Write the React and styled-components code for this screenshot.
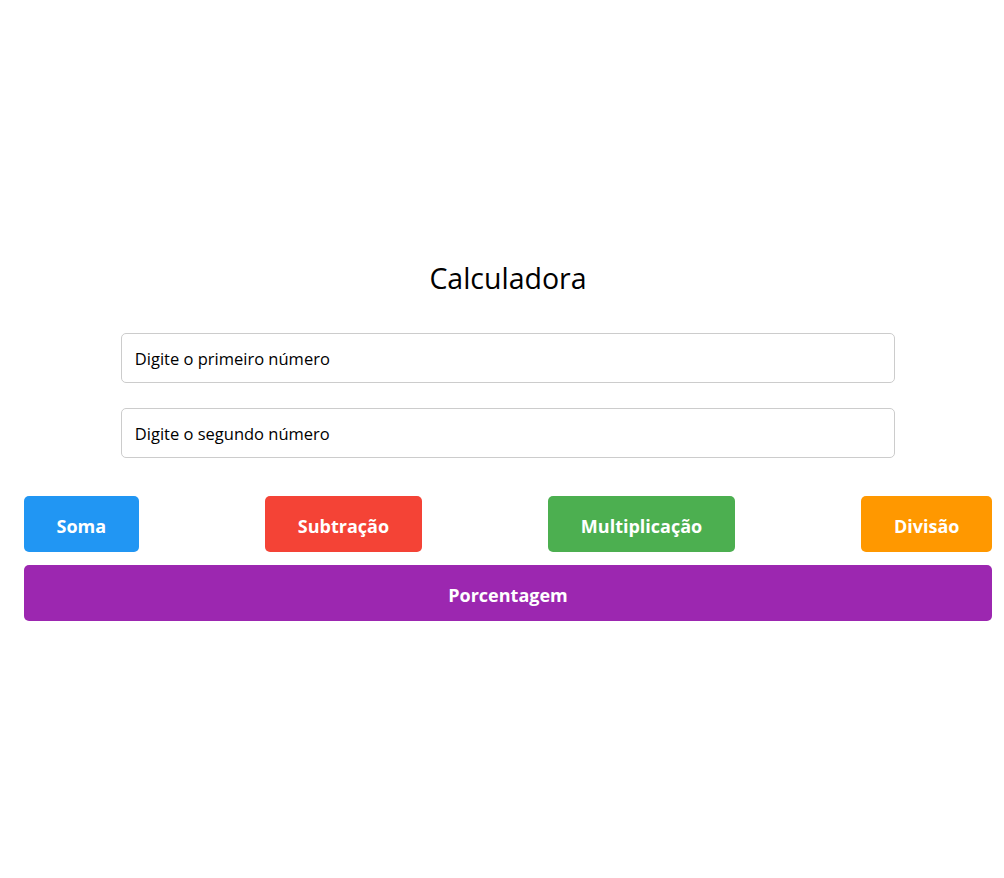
import React, { useState } from 'react';
import styled, { createGlobalStyle } from 'styled-components';

const GlobalStyle = createGlobalStyle`
  body {
    margin: 0;
    background: #fff;
    font-family: 'Open Sans', 'Noto Sans', sans-serif;
  }
`;

const Page = styled.div`
  min-height: 100vh;
  padding: 261px 12px 0 24px;
  box-sizing: border-box;
`;

const Calculator = styled.div`
  width: 968px;
  display: flex;
  flex-direction: column;
  align-items: center;
`;

const Title = styled.h1`
  font-size: 28.5px;
  font-weight: 400;
  color: #000;
  margin: 0 0 37px;
  line-height: 35px;
`;

const Input = styled.input`
  width: 80%;
  height: 50px;
  box-sizing: border-box;
  padding: 1px 13px 0;
  border: 1px solid #ccc;
  border-radius: 5px;
  font-family: inherit;
  font-size: 16.5px;
  color: #000;
  margin-bottom: 25px;

  &::placeholder {
    color: #000;
  }
`;

const ButtonRow = styled.div`
  width: 100%;
  display: flex;
  justify-content: space-between;
  margin-top: 13px;
`;

const Button = styled.button`
  background-color: ${props => props.color};
  color: white;
  border: none;
  height: 56px;
  padding: 3px 32.5px 0;
  border-radius: 5px;
  font-family: inherit;
  font-size: 18px;
  font-weight: 700;
  cursor: pointer;
  width: ${props => (props.full ? '100%' : 'auto')};
`;

const FullRow = styled.div`
  width: 100%;
  margin-top: 13px;
`;

const App = () => {
  const [a, setA] = useState('');
  const [b, setB] = useState('');

  return (
    <>
      <GlobalStyle />
      <Page>
        <Calculator>
          <Title>Calculadora</Title>
          <Input
            type="number"
            placeholder="Digite o primeiro número"
            value={a}
            onChange={e => setA(e.target.value)}
          />
          <Input
            type="number"
            placeholder="Digite o segundo número"
            value={b}
            onChange={e => setB(e.target.value)}
          />
          <ButtonRow>
            <Button color="#2196F3">Soma</Button>
            <Button color="#F44336">Subtração</Button>
            <Button color="#4CAF50">Multiplicação</Button>
            <Button color="#FF9800">Divisão</Button>
          </ButtonRow>
          <FullRow>
            <Button color="#9C27B0" full>Porcentagem</Button>
          </FullRow>
        </Calculator>
      </Page>
    </>
  );
};

export default App;
